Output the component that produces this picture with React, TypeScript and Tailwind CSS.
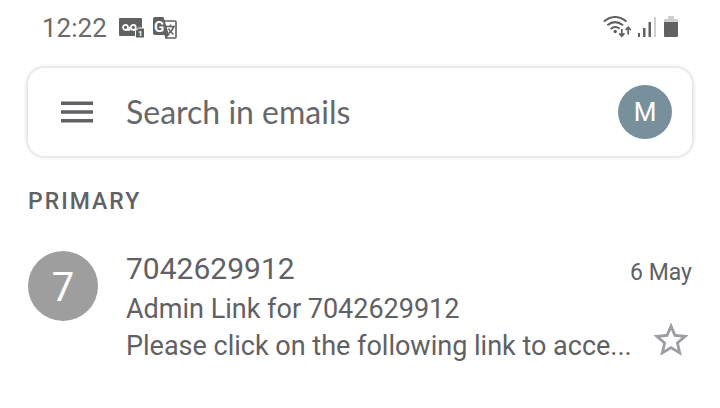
const mails = [
  {
    sender: "7042629912",
    initial: "7",
    subject: "Admin Link for 7042629912",
    preview: "Please click on the following link to acce...",
    date: "6 May",
  },
];

function VoicemailIcon() {
  return (
    <svg width="26" height="24" viewBox="0 0 26 24" aria-hidden="true">
      <rect x="0" y="2" width="23" height="18" rx="1" fill="#616161" />
      <g fill="none" stroke="#fff" strokeWidth="1.700">
        <circle cx="6.500" cy="11.300" r="2.500" />
        <circle cx="14.300" cy="11.300" r="2.500" />
        <path d="M6.500 13.800h4V11M14.300 13.800h5" />
      </g>
      <path d="M16.500 22v-7.500l3-2.500H25.500v10z" fill="#616161" stroke="#fff" strokeWidth="1" />
      <text x="19" y="20" fill="#fff" fontSize="8" fontWeight="700" fontFamily="Roboto, sans-serif">1</text>
    </svg>
  );
}

function TranslateIcon() {
  return (
    <svg width="24" height="24" viewBox="0 0 24 24" aria-hidden="true">
      <path d="M10 5h12a1 1 0 0 1 1 1v15a1 1 0 0 1-1 1H13z" fill="#fff" stroke="#616161" strokeWidth="1.600" />
      <path d="M2 1h8.500l5.500 18H2a2 2 0 0 1-2-2V3a2 2 0 0 1 2-2z" fill="#616161" />
      <path d="M11 18h6l-4 4.500z" fill="#616161" />
      <path d="M13 10.500H22M17.500 8.500v2M20.500 10.500c-.6 3-3 5.500-5 7M15.500 12.500c1 2.500 3 4.500 5 6" fill="none" stroke="#616161" strokeWidth="1.500" />
      <text x="1" y="15.500" fill="#fff" fontSize="15" fontWeight="700" fontFamily="Roboto, sans-serif">G</text>
    </svg>
  );
}

function WifiIcon() {
  return (
    <svg width="29" height="24" viewBox="0 0 29 24" aria-hidden="true">
      <g fill="none" stroke="#616161" strokeWidth="2">
        <path d="M.8 5.500Q12 -3.500 23.500 5.500" />
        <path d="M4.300 9.300Q12 3 20 9.300" />
        <path d="M7.600 13Q12 9.300 16.600 12.600" />
      </g>
      <circle cx="12.200" cy="15.500" r="1.700" fill="#616161" />
      <path d="M18.800 13v7M16.200 17.300l2.600 2.800 2.600-2.800M25.200 18.500v-7M22.600 14l2.600-2.800 2.600 2.800" fill="none" stroke="#616161" strokeWidth="1.800" />
    </svg>
  );
}

function SignalIcon() {
  return (
    <svg width="18" height="24" viewBox="0 0 18 24" aria-hidden="true">
      <path d="M0 17h2v4H0zM5 12h2.500v9H5zM10.500 6H13v15h-2.500z" fill="#616161" />
      <path d="M16 1h2v20h-2z" fill="#cfcfcf" />
    </svg>
  );
}

function BatteryIcon() {
  return (
    <svg width="14" height="24" viewBox="0 0 14 24" aria-hidden="true">
      <path d="M4 0h6v3h3a1 1 0 0 1 1 1v3H0V4a1 1 0 0 1 1-1h3z" fill="#cfcfcf" />
      <path d="M0 6h14v14a1 1 0 0 1-1 1H1a1 1 0 0 1-1-1z" fill="#616161" />
    </svg>
  );
}

function StatusBar() {
  return (
    <div className="flex h-14 items-center justify-between px-[42px]">
      <div className="flex items-center gap-2">
        <span className="mr-1 pt-px text-[26px] text-[#6b6b6b]">12:22</span>
        <VoicemailIcon />
        <TranslateIcon />
      </div>
      <div className="flex items-center gap-2">
        <div className="flex gap-1.5">
          <WifiIcon />
          <SignalIcon />
        </div>
        <BatteryIcon />
      </div>
    </div>
  );
}

function SearchBar() {
  return (
    <div className="mx-7 mt-3 flex h-[88px] items-center rounded-2xl bg-white pl-8 pr-5 shadow-[0_0_5px_rgba(0,0,0,0.24)]">
      <button type="button" aria-label="Open menu" className="mr-8 shrink-0">
        <svg width="34" height="24" viewBox="0 0 34 24" className="block">
          <path d="M1 1.400h32v3.600H1zM1 10.200h32v3.600H1zM1 19h32v3.600H1z" fill="#5f6165" />
        </svg>
      </button>
      <input
        type="text"
        aria-label="Search in emails"
        placeholder="Search in emails"
        className="h-12 min-w-0 flex-1 font-['Lato',sans-serif] text-[32px] text-[#66686c] outline-none placeholder:text-[#66686c]"
      />
      <button
        type="button"
        aria-label="Account"
        className="flex size-[54px] shrink-0 items-center justify-center rounded-full bg-[#78909c] text-[26px] text-white"
      >
        M
      </button>
    </div>
  );
}

function MailRow({ mail }: { mail: (typeof mails)[number] }) {
  return (
    <li className="flex gap-7">
      <div className="mt-1 flex size-[70px] shrink-0 items-center justify-center rounded-full bg-[#9e9e9e] pt-1 text-[40px] text-white">
        {mail.initial}
      </div>
      <div className="min-w-0 flex-1">
        <div className="flex items-center justify-between">
          <span className="text-[30px] leading-[44px]">{mail.sender}</span>
          <time className="pt-2 text-[23px]">{mail.date}</time>
        </div>
        <div className="flex items-end">
          <div className="min-w-0 flex-1 text-[27px] leading-[37px]">
            <p className="truncate">{mail.subject}</p>
            <p className="truncate">{mail.preview}</p>
          </div>
          <button type="button" aria-label="Star" className="mb-1 ml-4 shrink-0">
            <svg width="42" height="42" viewBox="0 0 24 24" className="block">
              <path
                d="M22 9.240l-7.190-.62L12 2 9.190 8.630 2 9.240l5.460 4.730L5.820 21 12 17.270 18.180 21l-1.630-7.030L22 9.240zM12 15.400l-3.760 2.270 1-4.280-3.320-2.880 4.380-.38L12 6.100l1.710 4.040 4.380.38-3.320 2.880 1 4.280L12 15.400z"
                fill="#9b9ea2"
              />
            </svg>
          </button>
        </div>
      </div>
    </li>
  );
}

export default function App() {
  return (
    <main className="min-h-screen bg-white font-['Roboto',sans-serif] text-[#5f6165]">
      <StatusBar />
      <SearchBar />
      <section className="px-7 pt-[30px]">
        <h1 className="text-[23px] font-medium leading-8 tracking-[2px]">PRIMARY</h1>
        <ul className="mt-[29px]">
          {mails.map((mail) => (
            <MailRow key={mail.sender} mail={mail} />
          ))}
        </ul>
      </section>
    </main>
  );
}
